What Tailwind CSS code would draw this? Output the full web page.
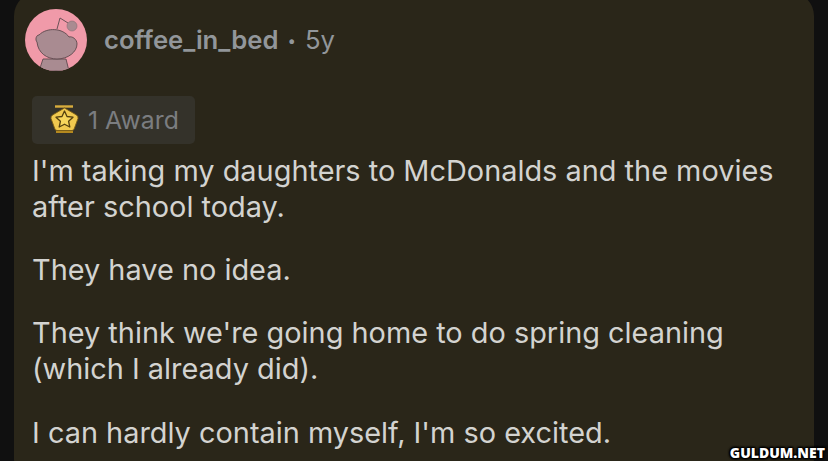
<!DOCTYPE html>
<html lang="en">
<head>
    <meta charset="UTF-8">
    <title>Comment</title>
    <script src="https://cdn.jsdelivr.net/npm/@tailwindcss/browser@4"></script>
</head>
<body class="bg-[#101010]">
    <div class="relative h-[461px] w-[828px] overflow-hidden font-['Inter',sans-serif]">
        <div class="ml-[14px] mt-[-8px] h-[490px] w-[800px] rounded-[24px] bg-[#2a2619] pl-[11px] pt-[17px]">
            <div class="flex items-center">
                <svg class="h-[62px] w-[62px]" viewBox="0 0 62 62">
                    <defs><clipPath id="av"><circle cx="31" cy="31" r="31"/></clipPath></defs>
                    <g clip-path="url(#av)">
                        <rect width="62" height="62" fill="#f09aa9"/>
                        <path d="M32 20 L35 9 L43 14" fill="none" stroke="#6a5257" stroke-width="1"/>
                        <circle cx="47" cy="17" r="5" fill="#a98b91" stroke="#8a6f75" stroke-width="0.6"/>
                        <path d="M18 50 L14 62 H44 L41 50Z" fill="#a98b91" stroke="#5e4a4e" stroke-width="0.9"/>
                        <path d="M14 26 C11 26 10 31 12 33 C13 44 22 50 32 50 C43 50 52 43 52 35 C52 30 47 27 44 28 C38 19 22 18 14 26Z" fill="#a98b91" stroke="#5e4a4e" stroke-width="0.9"/>
                    </g>
                </svg>
                <p class="ml-[17px] text-[25.7px] leading-[30px] text-[#92969a]"><span class="font-semibold">coffee_in_bed</span><span class="mx-[9px] text-[15px] align-[3px]">•</span><span>5y</span></p>
            </div>
            <div class="ml-[7px] mt-[25px] flex h-[48px] w-[163px] items-center rounded-[5px] bg-[#34322a] pl-[18px]">
                <svg class="mt-[-2px] h-[30px] w-[29px]" viewBox="0 0 29 30">
                    <path d="M5 2.500 H23" stroke="#d9ad3d" stroke-width="2.400" fill="none"/>
                    <path d="M14.500 4 L26.500 11 Q28.500 12.500 28 14.500 L24.500 24 Q24 26.500 22 26.500 H7 Q5 26.500 4.500 24 L1 14.500 Q0.500 12.500 2.500 11Z" fill="#f0c94f" stroke="#7a5c14" stroke-width="0.9"/>
                    <path d="M14.500 7 L17 12.500 L23 13.200 L18.600 17.300 L19.800 23 L14.500 20.200 L9.200 23 L10.400 17.300 L6 13.200 L12 12.500Z" fill="#f7d65c" stroke="#54400f" stroke-width="1.300" stroke-linejoin="round"/>
                    <rect x="6" y="27" width="17" height="2" fill="#b5891f"/>
                </svg>
                <span class="ml-[9px] mt-[2px] text-[24.8px] text-[#7b7d80]">1 Award</span>
            </div>
            <div class="ml-[7px] mt-[9px] flex w-[748px] flex-col gap-[27px] text-[28.9px] leading-[36px] text-[#d3d3d0]">
                <p>I'm taking my daughters to McDonalds and the movies after school today.</p>
                <p>They have no idea.</p>
                <p>They think we're going home to do spring cleaning (which I already did).</p>
                <p class="pt-[1px]">I can hardly contain myself, I'm so excited.</p>
            </div>
        </div>
        <span class="absolute bottom-[1px] right-[3px] text-[14px] leading-[15px] font-extrabold text-white font-['Open_Sans',sans-serif] [text-shadow:0_0_2px_#000,0_0_3px_#000,1px_1px_2px_#000,-1px_-1px_2px_#000,1px_-1px_2px_#000,-1px_1px_2px_#000]">GULDUM.NET</span>
    </div>
</body>
</html>
